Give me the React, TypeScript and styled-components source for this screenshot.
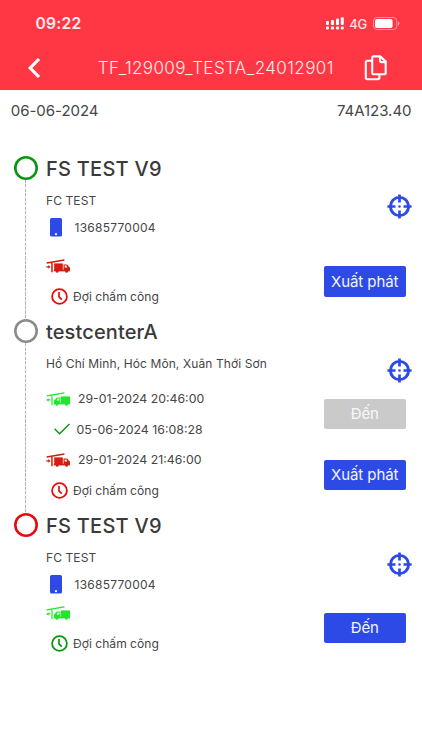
import React from 'react';
import styled, { createGlobalStyle } from 'styled-components';

const BLUE = '#2e4ae6';
const RED = '#e60c0c';
const GREEN = '#0a960f';

const GlobalStyle = createGlobalStyle`
  * { box-sizing: border-box; }
  body {
    margin: 0;
    background: #fff;
    font-family: Inter, "Noto Sans", sans-serif;
    color: #464646;
  }
`;

const Screen = styled.div`
  width: 100%;
  height: 750px;
  overflow: hidden;
  background: #fff;
  svg { display: block; flex: none; }
`;

const Header = styled.header`
  height: 90px;
  background: #ff3644;
  color: #fff;
`;

const StatusBar = styled.div`
  height: 46px;
  padding: 1px 22px 0 35.5px;
  display: flex;
  align-items: center;
  justify-content: space-between;
`;

const Clock = styled.span`
  font-size: 15.7px;
  font-weight: 600;
  letter-spacing: 0.2px;
  color: #ffeaec;
`;

const Indicators = styled.div`
  display: flex;
  align-items: center;
`;

const Network = styled.span`
  margin: 0 6px 0 5.5px;
  font-size: 13px;
  font-weight: 500;
  letter-spacing: -0.2px;
  color: #ffe0e3;
`;

const NavBar = styled.div`
  height: 44px;
  padding: 0 34.5px 0 27px;
  display: flex;
  align-items: center;
`;

const NavTitle = styled.h1`
  flex: 1;
  margin: 0 0 0 56.7px;
  font-size: 17px;
  font-weight: 300;
  letter-spacing: 0.4px;
  white-space: nowrap;
  color: #ffecee;
`;

const TripMeta = styled.div`
  height: 66.2px;
  padding: 11px 10.5px 0 10.7px;
  display: flex;
  justify-content: space-between;
  font-size: 15px;
  line-height: 20px;
  letter-spacing: -0.02px;
`;

const Timeline = styled.ol`
  margin: 0;
  padding: 0;
  list-style: none;
`;

const Stop = styled.li`
  display: grid;
  grid-template-columns: 46px 1fr;
`;

const Rail = styled.div`
  padding-left: 13.5px;
  width: 38px;
  display: flex;
  flex-direction: column;
  align-items: center;
`;

const Marker = styled.div<{ $color: string }>`
  width: 24px;
  height: 24px;
  flex: none;
  box-shadow: inset 0 0 0 2.6px ${p => p.$color};
  border-radius: 50%;
`;

const Connector = styled.div`
  flex: 1;
  width: 1px;
  background: repeating-linear-gradient(to bottom, #b4b4b4 0 3px, #f0f0f0 3px 4.5px);
`;

const StopBody = styled.div<{ $end: number }>`
  padding: 0 10.5px ${p => p.$end}px 0;
`;

const StopName = styled.h2<{ $spacing: number }>`
  margin: 0;
  height: 26px;
  font-size: 20px;
  line-height: 27px;
  font-weight: 500;
  letter-spacing: ${p => p.$spacing}px;
  color: #3a3a3a;
`;

const Info = styled.div<{ $gap: number }>`
  display: flex;
  justify-content: space-between;
  align-items: flex-start;
  margin-bottom: ${p => p.$gap}px;
`;

const Address = styled.div`
  height: 36px;
  line-height: 37px;
  font-size: 12px;
  letter-spacing: 0.1px;
`;

const Phone = styled.div`
  height: 18px;
  padding-left: 3.5px;
  display: flex;
  align-items: center;
  gap: 13px;
  font-size: 12px;
  letter-spacing: 0.25px;
`;

const LocateButton = styled.button`
  margin: 12.2px 0 -1.2px;
  padding: 0;
  border: 0;
  background: none;
`;

const Leg = styled.div`
  display: flex;
  justify-content: space-between;
  align-items: center;
  padding-right: 6px;
`;

const LegRow = styled.div<{ $indent: number; $gap: number; $size: number }>`
  height: 30.5px;
  padding-left: ${p => p.$indent}px;
  display: flex;
  align-items: center;
  gap: ${p => p.$gap}px;
  font-size: ${p => p.$size}px;
`;

const ActionButton = styled.button<{ $disabled?: boolean }>`
  width: 81.5px;
  height: 30.5px;
  padding: 0;
  border: 0;
  border-radius: 2px;
  background: ${p => (p.$disabled ? '#cacaca' : BLUE)};
  color: ${p => (p.$disabled ? '#f8f8f8' : '#f3f5ff')};
  font: 400 15px Inter, sans-serif;
  letter-spacing: -0.08px;
`;

const SignalIcon = () => (
  <svg width="18" height="13" viewBox="0 0 18 13" fill="#fff">
    <rect x="0" y="4" width="3" height="4" rx="1" />
    <rect x="5" y="3" width="3" height="5" rx="1" />
    <rect x="10" y="1.5" width="3" height="6.5" rx="1" />
    <rect x="14.8" y="0.3" width="3" height="7.7" rx="1" />
    {[0, 5, 10, 14.8].map(x => <rect key={x} x={x} y="9.4" width="3" height="3" rx="1" />)}
  </svg>
);

const BatteryIcon = () => (
  <svg width="27" height="13" viewBox="0 0 27 13" fill="none">
    <rect x="0.5" y="0.5" width="23.4" height="12" rx="3.6" stroke="#fff" strokeOpacity="0.48" />
    <rect x="2" y="2" width="17.6" height="9" rx="2" fill="#fff" />
    <path d="M25 4.5q1.5.5 1.5 2t-1.5 2z" fill="#fff" fillOpacity="0.5" />
  </svg>
);

const BackIcon = () => (
  <svg width="14" height="22" viewBox="0 0 14 22" fill="none" stroke="#fff" strokeWidth="3.2">
    <path d="M12 2 3.2 11 12 20" />
  </svg>
);

const CopyIcon = () => (
  <svg width="24" height="26" viewBox="0 0 24 26" fill="none" stroke="#fff" strokeWidth="2.1" strokeLinejoin="round">
    <path d="M9.8 1.4h6.6l5.3 5.2v11.1q0 1.6-1.6 1.6H9.8q-1.6 0-1.6-1.6V3q0-1.6 1.6-1.6z" />
    <path d="M16 1.8v3.9q0 1.4 1.4 1.4h4" />
    <path d="M8 5.8H3.4q-1.6 0-1.6 1.6v15.2q0 1.6 1.6 1.6h10.4q1.6 0 1.6-1.6v-3" />
  </svg>
);

const CrosshairIcon = () => (
  <svg width="25" height="25" viewBox="0 0 25 25" fill="none" stroke={BLUE}>
    <circle cx="12.5" cy="12.5" r="9.1" strokeWidth="2.9" />
    <path d="M12.5 .4v8.1M12.5 16.5v8.1M.4 12.5h8.1M16.5 12.5h8.1" strokeWidth="2.7" />
    <circle cx="12.5" cy="12.5" r="1.3" fill={BLUE} stroke="none" />
  </svg>
);

const PhoneIcon = () => (
  <svg width="12" height="19" viewBox="0 0 12 19">
    <rect width="12" height="18.5" rx="1.6" fill={BLUE} />
    <circle cx="6" cy="16.2" r="1.1" fill="#fff" />
  </svg>
);

const TimerIcon = ({ color }: { color: string }) => (
  <svg width="17" height="17" viewBox="0 0 17 17" fill="none" stroke={color} strokeWidth="1.8">
    <circle cx="8.5" cy="8.5" r="7.4" />
    <path d="M8 4v4.8l2.8 2.8" strokeWidth="1.7" />
  </svg>
);

const CheckIcon = () => (
  <svg width="16" height="12" viewBox="0 0 16 12" fill="none" stroke={GREEN} strokeWidth="1.4">
    <path d="M.6 5.8 5.6 10.8 15.4 1" />
  </svg>
);

const DepartTruckIcon = () => (
  <svg width="25" height="14" viewBox="0 0 25 14" fill="#cc2014">
    <path d="M.5 3.2 18.2.2l.4 1.5L.9 4.7zM5.2 3.6h1.5v9.7H5.2z" />
    <path d="M.3 7.3h2V6l2.2 1.9-2.2 1.9V8.5h-2z" />
    <path d="M8.2 4.4h8.6v7.2H8.2z" fill="#dc1a0e" />
    <path d="M7.8 10.7h16.1v1.7H7.8z" />
    <path d="M17.5 5.4h3.2q1.3 0 1.9 2.1l1.4.9v3.4h-6.5z" />
    <path d="M18.7 6.6h1.7l.8 2h-2.5z" fill="#fff" />
    <circle cx="11.2" cy="12.4" r="1.4" />
    <circle cx="20.6" cy="12.4" r="1.4" />
  </svg>
);

const ArriveTruckIcon = () => (
  <svg width="25" height="14" viewBox="0 0 25 14" fill="#22e62c">
    <path d="M.5 3.2 18.2.2l.4 1.3L.9 4.5zM5.4 3.6h1.2v9.7H5.4z" />
    <path d="M4.5 7.3H2.5V6L.3 7.9l2.2 1.9V8.5h2z" />
    <path d="M15 4.4h9v7.2h-9z" />
    <path d="M8 10.7h16v1.7H8z" />
    <path d="M14.4 5.4h-3.2q-1.3 0-1.9 2.1l-1.4.9v3.4h6.5z" />
    <path d="M13.3 6.6h-1.8l-.8 2h2.6z" fill="#fff" />
    <circle cx="10.9" cy="12.4" r="1.4" />
    <circle cx="20.4" cy="12.4" r="1.4" />
  </svg>
);

const TruckRow = ({ kind, time }: { kind: 'arrive' | 'depart'; time?: string }) => (
  <LegRow $indent={0.3} $gap={6.7} $size={12.3}>
    {kind === 'arrive' ? <ArriveTruckIcon /> : <DepartTruckIcon />}
    {time}
  </LegRow>
);

const PendingRow = ({ color }: { color: string }) => (
  <LegRow $indent={5} $gap={5} $size={12.1}>
    <TimerIcon color={color} />
    Đợi chấm công
  </LegRow>
);

const Locate = () => (
  <LocateButton aria-label="Vị trí"><CrosshairIcon /></LocateButton>
);

export default function App() {
  return (
    <Screen>
      <GlobalStyle />
      <Header>
        <StatusBar>
          <Clock>09:22</Clock>
          <Indicators>
            <SignalIcon />
            <Network>4G</Network>
            <BatteryIcon />
          </Indicators>
        </StatusBar>
        <NavBar>
          <BackIcon />
          <NavTitle>TF_129009_TESTA_24012901</NavTitle>
          <CopyIcon />
        </NavBar>
      </Header>
      <TripMeta>
        <span>06-06-2024</span>
        <span>74A123.40</span>
      </TripMeta>
      <Timeline>
        <Stop>
          <Rail><Marker $color={GREEN} /><Connector /></Rail>
          <StopBody $end={7.5}>
            <StopName $spacing={0.25}>FS TEST V9</StopName>
            <Info $gap={14.8}>
              <div>
                <Address>FC TEST</Address>
                <Phone><PhoneIcon />13685770004</Phone>
              </div>
              <Locate />
            </Info>
            <Leg>
              <div>
                <TruckRow kind="depart" />
                <PendingRow color={RED} />
              </div>
              <ActionButton>Xuất phát</ActionButton>
            </Leg>
          </StopBody>
        </Stop>
        <Stop>
          <Rail><Marker $color="#8b8b8b" /><Connector /></Rail>
          <StopBody $end={8}>
            <StopName $spacing={0.12}>testcenterA</StopName>
            <Info $gap={1.9}>
              <Address>Hồ Chí Minh, Hóc Môn, Xuân Thới Sơn</Address>
              <Locate />
            </Info>
            <Leg>
              <div>
                <TruckRow kind="arrive" time="29-01-2024 20:46:00" />
                <LegRow $indent={7.5} $gap={7} $size={12.35}>
                  <CheckIcon />
                  05-06-2024 16:08:28
                </LegRow>
              </div>
              <ActionButton $disabled>Đến</ActionButton>
            </Leg>
            <Leg>
              <div>
                <TruckRow kind="depart" time="29-01-2024 21:46:00" />
                <PendingRow color={RED} />
              </div>
              <ActionButton>Xuất phát</ActionButton>
            </Leg>
          </StopBody>
        </Stop>
        <Stop>
          <Rail><Marker $color={RED} /></Rail>
          <StopBody $end={0}>
            <StopName $spacing={0.25}>FS TEST V9</StopName>
            <Info $gap={4}>
              <div>
                <Address>FC TEST</Address>
                <Phone><PhoneIcon />13685770004</Phone>
              </div>
              <Locate />
            </Info>
            <Leg>
              <div>
                <TruckRow kind="arrive" />
                <PendingRow color={GREEN} />
              </div>
              <ActionButton>Đến</ActionButton>
            </Leg>
          </StopBody>
        </Stop>
      </Timeline>
    </Screen>
  );
}
